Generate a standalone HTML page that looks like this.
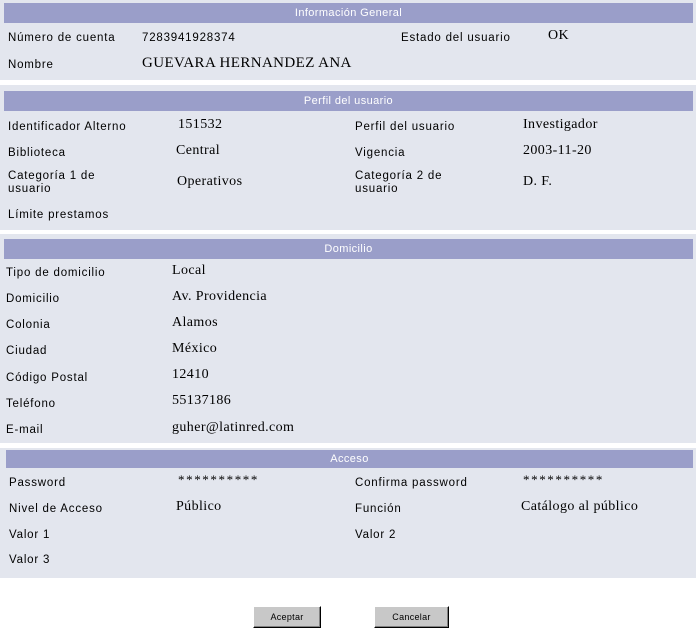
<!DOCTYPE html>
<html><head><meta charset="utf-8"><style>
body{margin:0;width:696px;height:630px;background:#fff;position:relative;overflow:hidden}
.p{position:absolute;left:0;width:696px;background:#e3e6ee}
.h{position:absolute;height:20px;background:#9a9ec9;color:#fff;font:11px "Liberation Sans",sans-serif;text-align:center;line-height:20px;letter-spacing:0.4px}
.l{position:absolute;font:11.5px/13px "Liberation Sans",sans-serif;color:#000;white-space:nowrap;letter-spacing:0.8px}
.v{position:absolute;font:14px/16px "Liberation Serif",serif;color:#000;white-space:nowrap;letter-spacing:0.4px}
.s{letter-spacing:1.6px;font-size:13px}
.b{position:absolute;height:20px;background:#c8c8c8;border:1px solid;border-color:#fff #000 #000 #fff;box-shadow:inset -1px -1px #808080;font:9px/20px "Liberation Sans",sans-serif;text-align:center;letter-spacing:0.3px}
</style></head><body>
<div class="p" style="top:0;height:80px"></div>
<div class="h" style="left:4px;width:689px;top:3px">Información General</div>
<div class="l" style="left:8px;top:32px">Número de cuenta</div>
<div class="l" style="left:142px;top:32px">7283941928374</div>
<div class="l" style="left:401px;top:32px">Estado del usuario</div>
<div class="v" style="left:548px;top:28px">OK</div>
<div class="l" style="left:8px;top:59px">Nombre</div>
<div class="v" style="left:142px;top:55px;font-size:15px">GUEVARA HERNANDEZ ANA</div>

<div class="p" style="top:85px;height:145px"></div>
<div class="h" style="left:4px;width:689px;top:91px">Perfil del usuario</div>
<div class="l" style="left:8px;top:121px">Identificador Alterno</div>
<div class="v" style="left:178px;top:117px">151532</div>
<div class="l" style="left:355px;top:121px">Perfil del usuario</div>
<div class="v" style="left:523px;top:117px">Investigador</div>
<div class="l" style="left:8px;top:147px">Biblioteca</div>
<div class="v" style="left:176px;top:143px">Central</div>
<div class="l" style="left:355px;top:147px">Vigencia</div>
<div class="v" style="left:523px;top:143px">2003-11-20</div>
<div class="l" style="left:8px;top:170px">Categoría 1 de<br>usuario</div>
<div class="v" style="left:177px;top:174px">Operativos</div>
<div class="l" style="left:355px;top:170px">Categoría 2 de<br>usuario</div>
<div class="v" style="left:523px;top:174px">D. F.</div>
<div class="l" style="left:8px;top:209px">Límite prestamos</div>

<div class="p" style="top:234px;height:209px"></div>
<div class="h" style="left:4px;width:689px;top:239px">Domicilio</div>
<div class="l" style="left:6px;top:267px">Tipo de domicilio</div><div class="v" style="left:172px;top:263px">Local</div>
<div class="l" style="left:6px;top:293px">Domicilio</div><div class="v" style="left:172px;top:289px">Av. Providencia</div>
<div class="l" style="left:6px;top:319px">Colonia</div><div class="v" style="left:172px;top:315px">Alamos</div>
<div class="l" style="left:6px;top:345px">Ciudad</div><div class="v" style="left:172px;top:341px">México</div>
<div class="l" style="left:6px;top:372px">Código Postal</div><div class="v" style="left:172px;top:367px">12410</div>
<div class="l" style="left:6px;top:398px">Teléfono</div><div class="v" style="left:172px;top:393px">55137186</div>
<div class="l" style="left:6px;top:424px">E-mail</div><div class="v" style="left:172px;top:420px">guher@latinred.com</div>

<div class="p" style="top:448px;height:130px"></div>
<div class="h" style="left:6px;width:687px;top:450px;height:18px;line-height:18px">Acceso</div>
<div class="l" style="left:9px;top:477px">Password</div>
<div class="v s" style="left:178px;top:472px">**********</div>
<div class="l" style="left:355px;top:477px">Confirma password</div>
<div class="v s" style="left:523px;top:472px">**********</div>
<div class="l" style="left:9px;top:503px">Nivel de Acceso</div>
<div class="v" style="left:176px;top:499px">Público</div>
<div class="l" style="left:355px;top:503px">Función</div>
<div class="v" style="left:521px;top:499px">Catálogo al público</div>
<div class="l" style="left:9px;top:529px">Valor 1</div>
<div class="l" style="left:355px;top:529px">Valor 2</div>
<div class="l" style="left:9px;top:554px">Valor 3</div>

<div class="b" style="left:253px;top:606px;width:66px">Aceptar</div>
<div class="b" style="left:374px;top:606px;width:73px">Cancelar</div>
</body></html>
